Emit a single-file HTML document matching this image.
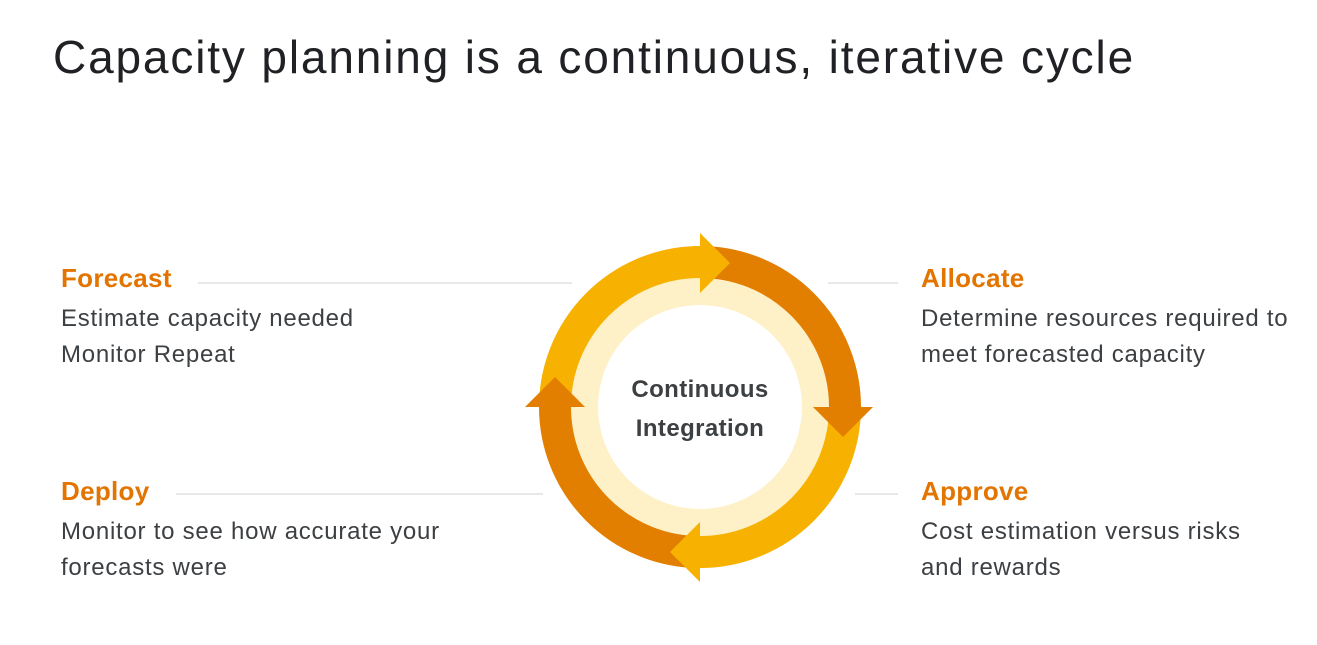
<!DOCTYPE html>
<html><head><meta charset="utf-8"><style>
body{margin:0;width:1317px;height:645px;background:#fff;position:relative;overflow:hidden;font-family:"Liberation Sans",Arial,sans-serif}
.t{position:absolute;left:53px;top:30px;font-size:46px;color:#202124;white-space:nowrap;letter-spacing:1.85px}
.h{position:absolute;font-size:26px;font-weight:bold;color:#e37400;white-space:nowrap;letter-spacing:0.3px}
.b{position:absolute;font-size:24px;color:#3c4043;line-height:36px;white-space:nowrap;letter-spacing:0.75px}
.l{position:absolute;height:2px;background:#e8e8e8}
</style></head><body>
<div class="t">Capacity planning is a continuous, iterative cycle</div>
<div class="h" style="left:61px;top:263px">Forecast</div>
<div class="b" style="left:61px;top:301px">Estimate capacity needed<br>Monitor Repeat</div>
<div class="l" style="left:198px;top:282px;width:374px"></div>
<div class="h" style="left:921px;top:263px">Allocate</div>
<div class="b" style="left:921px;top:301px">Determine resources required to<br>meet forecasted capacity</div>
<div class="l" style="left:828px;top:282px;width:70px"></div>
<div class="h" style="left:61px;top:476px">Deploy</div>
<div class="b" style="left:61px;top:514px">Monitor to see how accurate your<br>forecasts were</div>
<div class="l" style="left:176px;top:493px;width:367px"></div>
<div class="h" style="left:921px;top:476px">Approve</div>
<div class="b" style="left:921px;top:514px">Cost estimation versus risks<br>and rewards</div>
<div class="l" style="left:855px;top:493px;width:43px"></div>
<svg style="position:absolute;left:0;top:0" width="1317" height="645">
<circle cx="700" cy="407" r="116" fill="#fff" stroke="#fef0c7" stroke-width="28"/>
<path d="M555 407 A145 145 0 0 1 700 262" fill="none" stroke="#f7b100" stroke-width="32"/>
<path d="M700 262 A145 145 0 0 1 845 407" fill="none" stroke="#e37f00" stroke-width="32"/>
<path d="M845 407 A145 145 0 0 1 700 552" fill="none" stroke="#f7b100" stroke-width="32"/>
<path d="M700 552 A145 145 0 0 1 555 407" fill="none" stroke="#e37f00" stroke-width="32"/>
<polygon points="700,233 730,263 700,293" fill="#f7b100"/>
<polygon points="813,407 873,407 843,437" fill="#e37f00"/>
<polygon points="700,522 700,582 670,552" fill="#f7b100"/>
<polygon points="525,407 585,407 555,377" fill="#e37f00"/>
<text x="700" y="397" text-anchor="middle" font-family="Liberation Sans,Arial,sans-serif" font-size="24" font-weight="bold" letter-spacing="0.4" fill="#3c4043">Continuous</text>
<text x="700" y="436" text-anchor="middle" font-family="Liberation Sans,Arial,sans-serif" font-size="24" font-weight="bold" letter-spacing="0.4" fill="#3c4043">Integration</text>
</svg>
</body></html>
